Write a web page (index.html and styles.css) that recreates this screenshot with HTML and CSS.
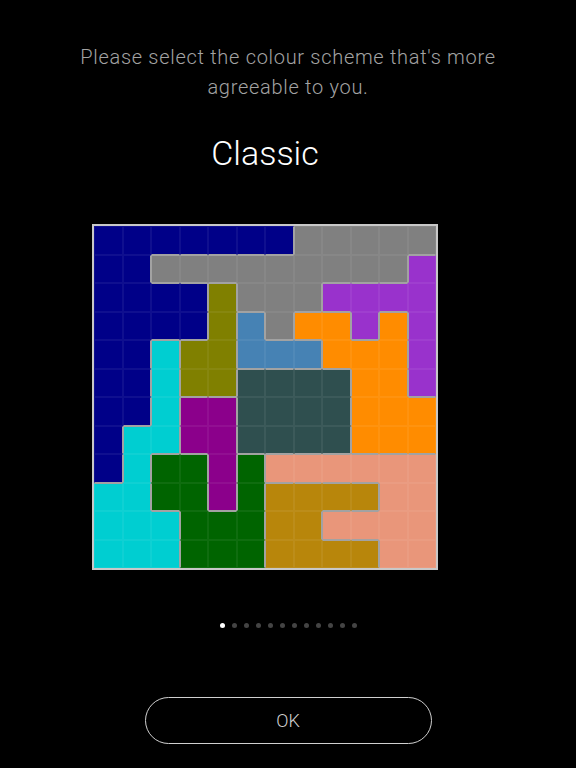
FILE: index.html
```html
<!DOCTYPE html>
<html lang="en">
<head>
<meta charset="utf-8">
<title>Colour scheme</title>
<link rel="stylesheet" href="styles.css">
</head>
<body>
<main class="screen">
  <p class="intro">Please select the colour scheme that's more agreeable to you.</p>
  <section class="scheme">
    <h1 class="scheme-name">Classic</h1>
    <div class="board" id="board"></div>
  </section>
  <div class="pager">
    <span class="dot active"></span><span class="dot"></span><span class="dot"></span><span class="dot"></span><span class="dot"></span><span class="dot"></span><span class="dot"></span><span class="dot"></span><span class="dot"></span><span class="dot"></span><span class="dot"></span><span class="dot"></span>
  </div>
  <button class="ok" type="button">OK</button>
</main>
<script src="script.js"></script>
</body>
</html>
```

FILE: styles.css
```css
html, body {
  margin: 0;
  padding: 0;
  background: #000;
}
body {
  font-family: Roboto, "Liberation Sans", sans-serif;
  width: 576px;
  height: 768px;
  overflow: hidden;
}
.screen {
  display: flex;
  flex-direction: column;
  align-items: center;
}
.intro {
  margin: 42px 0 0;
  max-width: 480px;
  text-align: center;
  font-size: 20px;
  font-weight: 300;
  line-height: 30px;
  color: #a3a3a3;
  letter-spacing: 0.7px;
}
.scheme {
  display: flex;
  flex-direction: column;
  align-items: center;
  margin-right: 46px;
}
.scheme-name {
  margin: 31px 0 0;
  font-size: 34px;
  font-weight: 300;
  line-height: 40px;
  color: #fff;
}
.board {
  margin-top: 51px;
  width: 342px;
  height: 342px;
  border: 2px solid #c8c8c8;
  display: grid;
  grid-template-columns: repeat(12, 1fr);
  grid-template-rows: repeat(12, 1fr);
}
.cell {
  box-sizing: border-box;
  border: 1px solid rgba(255, 255, 255, 0.06);
}
.bt { border-top-color: #a2a2a2; }
.bb { border-bottom-color: #a2a2a2; }
.bl { border-left-color: #a2a2a2; }
.br { border-right-color: #a2a2a2; }
.k-N { background-color: #000088; }
.k-G { background-color: #808080; }
.k-P { background-color: #9932cc; }
.k-O { background-color: #808000; }
.k-S { background-color: #4682b4; }
.k-R { background-color: #ff8c00; }
.k-C { background-color: #00ced1; }
.k-D { background-color: #2f4f4f; }
.k-M { background-color: #8b008b; }
.k-E { background-color: #006400; }
.k-L { background-color: #e9967a; }
.k-Y { background-color: #b8860b; }
.pager {
  margin-top: 53px;
  display: flex;
  gap: 7px;
}
.dot {
  width: 5px;
  height: 5px;
  border-radius: 50%;
  background: #444;
}
.dot.active {
  background: #fff;
}
.ok {
  margin-top: 69px;
  width: 287px;
  height: 47px;
  border: 1.5px solid #d0d0d0;
  border-radius: 24px;
  background: transparent;
  color: #d0d0d0;
  font-family: Roboto, "Liberation Sans", sans-serif;
  font-size: 18px;
  font-weight: 300;
  padding: 0;
}
```

FILE: script.js
```js
var rows = [
  "NNNNNNNGGGGG",
  "NNGGGGGGGGGP",
  "NNNNOGGGPPPP",
  "NNNNOSGRRPRP",
  "NNCOOSSSRRRP",
  "NNCOODDDDRRP",
  "NNCMMDDDDRRR",
  "NCCMMDDDDRRR",
  "NCEEMELLLLLL",
  "CCEEMEYYYYLL",
  "CCCEEEYYLLLL",
  "CCCEEEYYYYLL"
];
var board = document.getElementById("board");
rows.forEach(function (row, r) {
  row.split("").forEach(function (ch, c) {
    var d = document.createElement("div");
    d.className = "cell k-" + ch;
    if (r > 0 && rows[r - 1][c] !== ch) d.classList.add("bt");
    if (r < 11 && rows[r + 1][c] !== ch) d.classList.add("bb");
    if (c > 0 && row[c - 1] !== ch) d.classList.add("bl");
    if (c < 11 && row[c + 1] !== ch) d.classList.add("br");
    board.appendChild(d);
  });
});
```
